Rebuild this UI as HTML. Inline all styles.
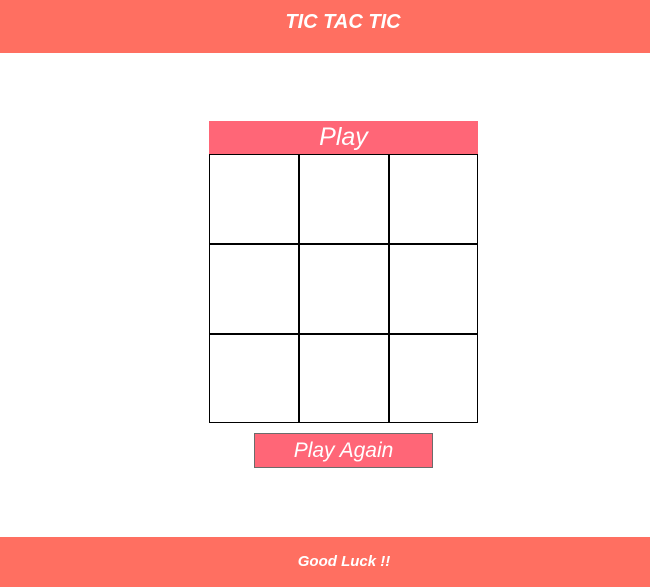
<!DOCTYPE html>
<html><head><style>
*{margin:0;padding:0;box-sizing:border-box}
body{width:650px;height:587px;background:#fff;position:relative;font-family:"Liberation Sans",sans-serif;overflow:hidden}
.hdr{position:absolute;left:0;top:0;width:650px;height:53px;background:#ff6f61;color:#fff;font-weight:bold;font-style:italic;font-size:20px;text-align:center;line-height:44px;padding-left:36px}
.ftr{position:absolute;left:0;top:537px;width:650px;height:50px;background:#ff6f61;color:#fff;font-weight:bold;font-style:italic;font-size:15px;text-align:center;line-height:50px;padding-left:38px}
.play{position:absolute;left:209px;top:121px;width:269px;height:33px;background:#ff6677;color:#fff;font-style:italic;font-size:25px;text-align:center;line-height:33px}
.c{position:absolute;width:90px;height:90px;border:1px solid #000}
.btn{position:absolute;left:254px;top:433px;width:179px;height:35px;background:#ff6677;border:1px solid #6b6b6b;color:#fff;font-style:italic;font-size:21px;text-align:center;line-height:33px}
</style></head><body>
<div class="hdr">TIC TAC TIC</div>
<div class="play">Play</div>
<div class="c" style="left:209px;top:154px"></div>
<div class="c" style="left:299px;top:154px"></div>
<div class="c" style="left:389px;top:154px;width:89px"></div>
<div class="c" style="left:209px;top:244px"></div>
<div class="c" style="left:299px;top:244px"></div>
<div class="c" style="left:389px;top:244px;width:89px"></div>
<div class="c" style="left:209px;top:334px;height:89px"></div>
<div class="c" style="left:299px;top:334px;height:89px"></div>
<div class="c" style="left:389px;top:334px;width:89px;height:89px"></div>
<div class="btn">Play Again</div>
<div class="ftr">Good Luck !!</div>
</body></html>
